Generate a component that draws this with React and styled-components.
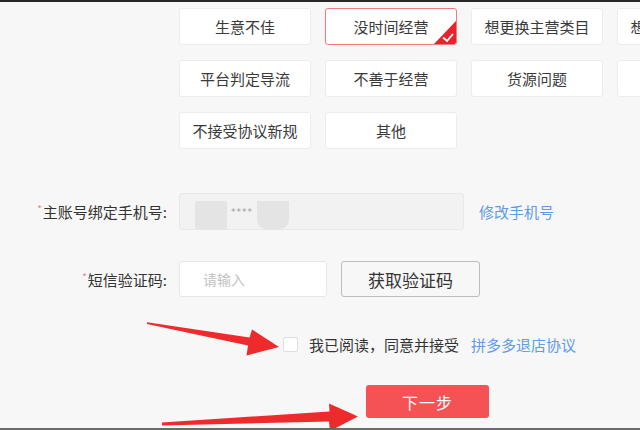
import React from 'react';
import styled, { createGlobalStyle } from 'styled-components';

const GlobalStyle = createGlobalStyle`
  html, body {
    margin: 0;
    padding: 0;
    background: #f7f7f7;
    overflow: hidden;
  }
  * {
    box-sizing: border-box;
  }
`;

const StyledPage = styled.div`
  position: relative;
  width: 640px;
  height: 430px;
  overflow: hidden;
  background: #f7f7f7;
  border-top: 2px solid #262626;
  border-bottom: 2px solid #6b6b6b;
  padding-top: 6px;
  font-family: 'Noto Sans CJK SC', 'Noto Sans', sans-serif;
  color: #333;
`;

const StyledOptionGrid = styled.div`
  display: grid;
  grid-template-columns: repeat(4, 132px);
  grid-auto-rows: 37px;
  column-gap: 14px;
  row-gap: 15px;
  margin-left: 179px;
  width: 800px;
`;

const StyledOption = styled.div`
  position: relative;
  overflow: hidden;
  display: flex;
  align-items: center;
  justify-content: center;
  background: #fff;
  border: 1px solid ${({ $active }) => ($active ? '#ef7b7f' : '#ececec')};
  border-radius: 3px;
  font-size: 15px;
  color: #3a3a3a;
  white-space: nowrap;

  .tick {
    position: absolute;
    right: -1px;
    bottom: -1px;
    width: 24px;
    height: 25px;
  }
`;

const StyledField = styled.div`
  display: flex;
  align-items: center;
  margin-top: ${({ $top }) => $top}px;
`;

const StyledLabel = styled.div`
  width: 167px;
  margin-right: 12px;
  text-align: right;
  font-size: 15px;
  color: #333;
  white-space: nowrap;

  .star {
    color: #f47a8a;
    font-size: 10px;
    vertical-align: 5px;
    margin-right: 1px;
  }
`;

const StyledPhoneBox = styled.div`
  display: flex;
  align-items: center;
  width: 285px;
  height: 37px;
  padding-left: 15px;
  background: #f2f2f2;
  border: 1px solid #e8e8e8;
  border-radius: 3px;
`;

const StyledBlob = styled.div`
  align-self: flex-end;
  width: 32px;
  height: 28px;
  background: #e4e4e4;
  border-radius: ${({ $round }) => ($round ? '0 0 9px 9px' : '2px')};
`;

const StyledMaskDots = styled.span`
  width: 30px;
  text-align: center;
  font-size: 9px;
  letter-spacing: 1px;
  color: #999;
  font-family: 'DejaVu Sans', sans-serif;
`;

const StyledLink = styled.a`
  color: #5f9be6;
  font-size: 15px;
  text-decoration: none;
  margin-left: ${({ $gap }) => $gap}px;
  white-space: nowrap;
`;

const StyledCodeInput = styled.div`
  display: flex;
  align-items: center;
  width: 148px;
  height: 36px;
  padding-left: 23px;
  background: #fff;
  border: 1px solid #e6e6e6;
  border-radius: 3px;
  font-size: 14px;
  color: #c2c2c2;
`;

const StyledCodeButton = styled.button`
  width: 139px;
  height: 36px;
  margin-left: 14px;
  background: #f7f7f7;
  border: 1px solid #bdbdbd;
  border-radius: 3px;
  font-family: inherit;
  font-size: 17px;
  color: #333;
  padding: 0;
`;

const StyledAgree = styled.div`
  display: flex;
  align-items: center;
  height: 16px;
  margin-top: 39px;
  margin-left: 283px;
  font-size: 15px;
  color: #333;
  white-space: nowrap;
`;

const StyledCheckbox = styled.span`
  width: 15px;
  height: 15px;
  margin-right: 11px;
  background: #fff;
  border: 1px solid #dedede;
  border-radius: 2px;
`;

const StyledNext = styled.button`
  display: block;
  width: 123px;
  height: 33px;
  margin: 33px 0 0 366px;
  padding: 0;
  background: #f45255;
  border: none;
  border-radius: 3px;
  font-family: inherit;
  font-size: 16px;
  letter-spacing: 1px;
  color: #fff;
`;

const StyledArrows = styled.svg`
  position: absolute;
  left: 0;
  top: -2px;
  width: 640px;
  height: 430px;
  pointer-events: none;
`;

const reasons = [
  '生意不佳',
  '没时间经营',
  '想更换主营类目',
  '想更换店铺类型',
  '平台判定导流',
  '不善于经营',
  '货源问题',
  '其他原因',
  '不接受协议新规',
  '其他',
];

const Tick = () => (
  <svg className="tick" viewBox="0 0 24 25">
    <polygon points="24,0 24,25 0,25" fill="#e8232b" />
    <polyline points="10,17.5 14,21 20,14" fill="none" stroke="#fff" strokeWidth="1.8" />
  </svg>
);

const App = () => (
  <>
    <GlobalStyle />
    <StyledPage>
      <StyledOptionGrid>
        {reasons.map((r, i) => (
          <StyledOption key={i} $active={i === 1}>
            {r}
            {i === 1 && <Tick />}
          </StyledOption>
        ))}
      </StyledOptionGrid>

      <StyledField $top={44}>
        <StyledLabel>
          <span className="star">*</span>主账号绑定手机号:
        </StyledLabel>
        <StyledPhoneBox>
          <StyledBlob />
          <StyledMaskDots>****</StyledMaskDots>
          <StyledBlob $round />
        </StyledPhoneBox>
        <StyledLink href="#" $gap={15}>
          修改手机号
        </StyledLink>
      </StyledField>

      <StyledField $top={31}>
        <StyledLabel>
          <span className="star">*</span>短信验证码:
        </StyledLabel>
        <StyledCodeInput>请输入</StyledCodeInput>
        <StyledCodeButton>获取验证码</StyledCodeButton>
      </StyledField>

      <StyledAgree>
        <StyledCheckbox />
        我已阅读，同意并接受
        <StyledLink href="#" $gap={12}>
          拼多多退店协议
        </StyledLink>
      </StyledAgree>

      <StyledNext>下一步</StyledNext>

      <StyledArrows viewBox="0 0 640 430">
        <polygon
          points="147,322.3 249.5,337.5 252,329.5 279,347 246.5,355.5 248,345.5 147,324"
          fill="#ee2a2c"
        />
        <polygon
          points="162,422.5 329.5,411.5 329,403.5 358,416.5 330,431 329,421.5 162,425.5"
          fill="#ee2a2c"
        />
      </StyledArrows>
    </StyledPage>
  </>
);

export default App;
